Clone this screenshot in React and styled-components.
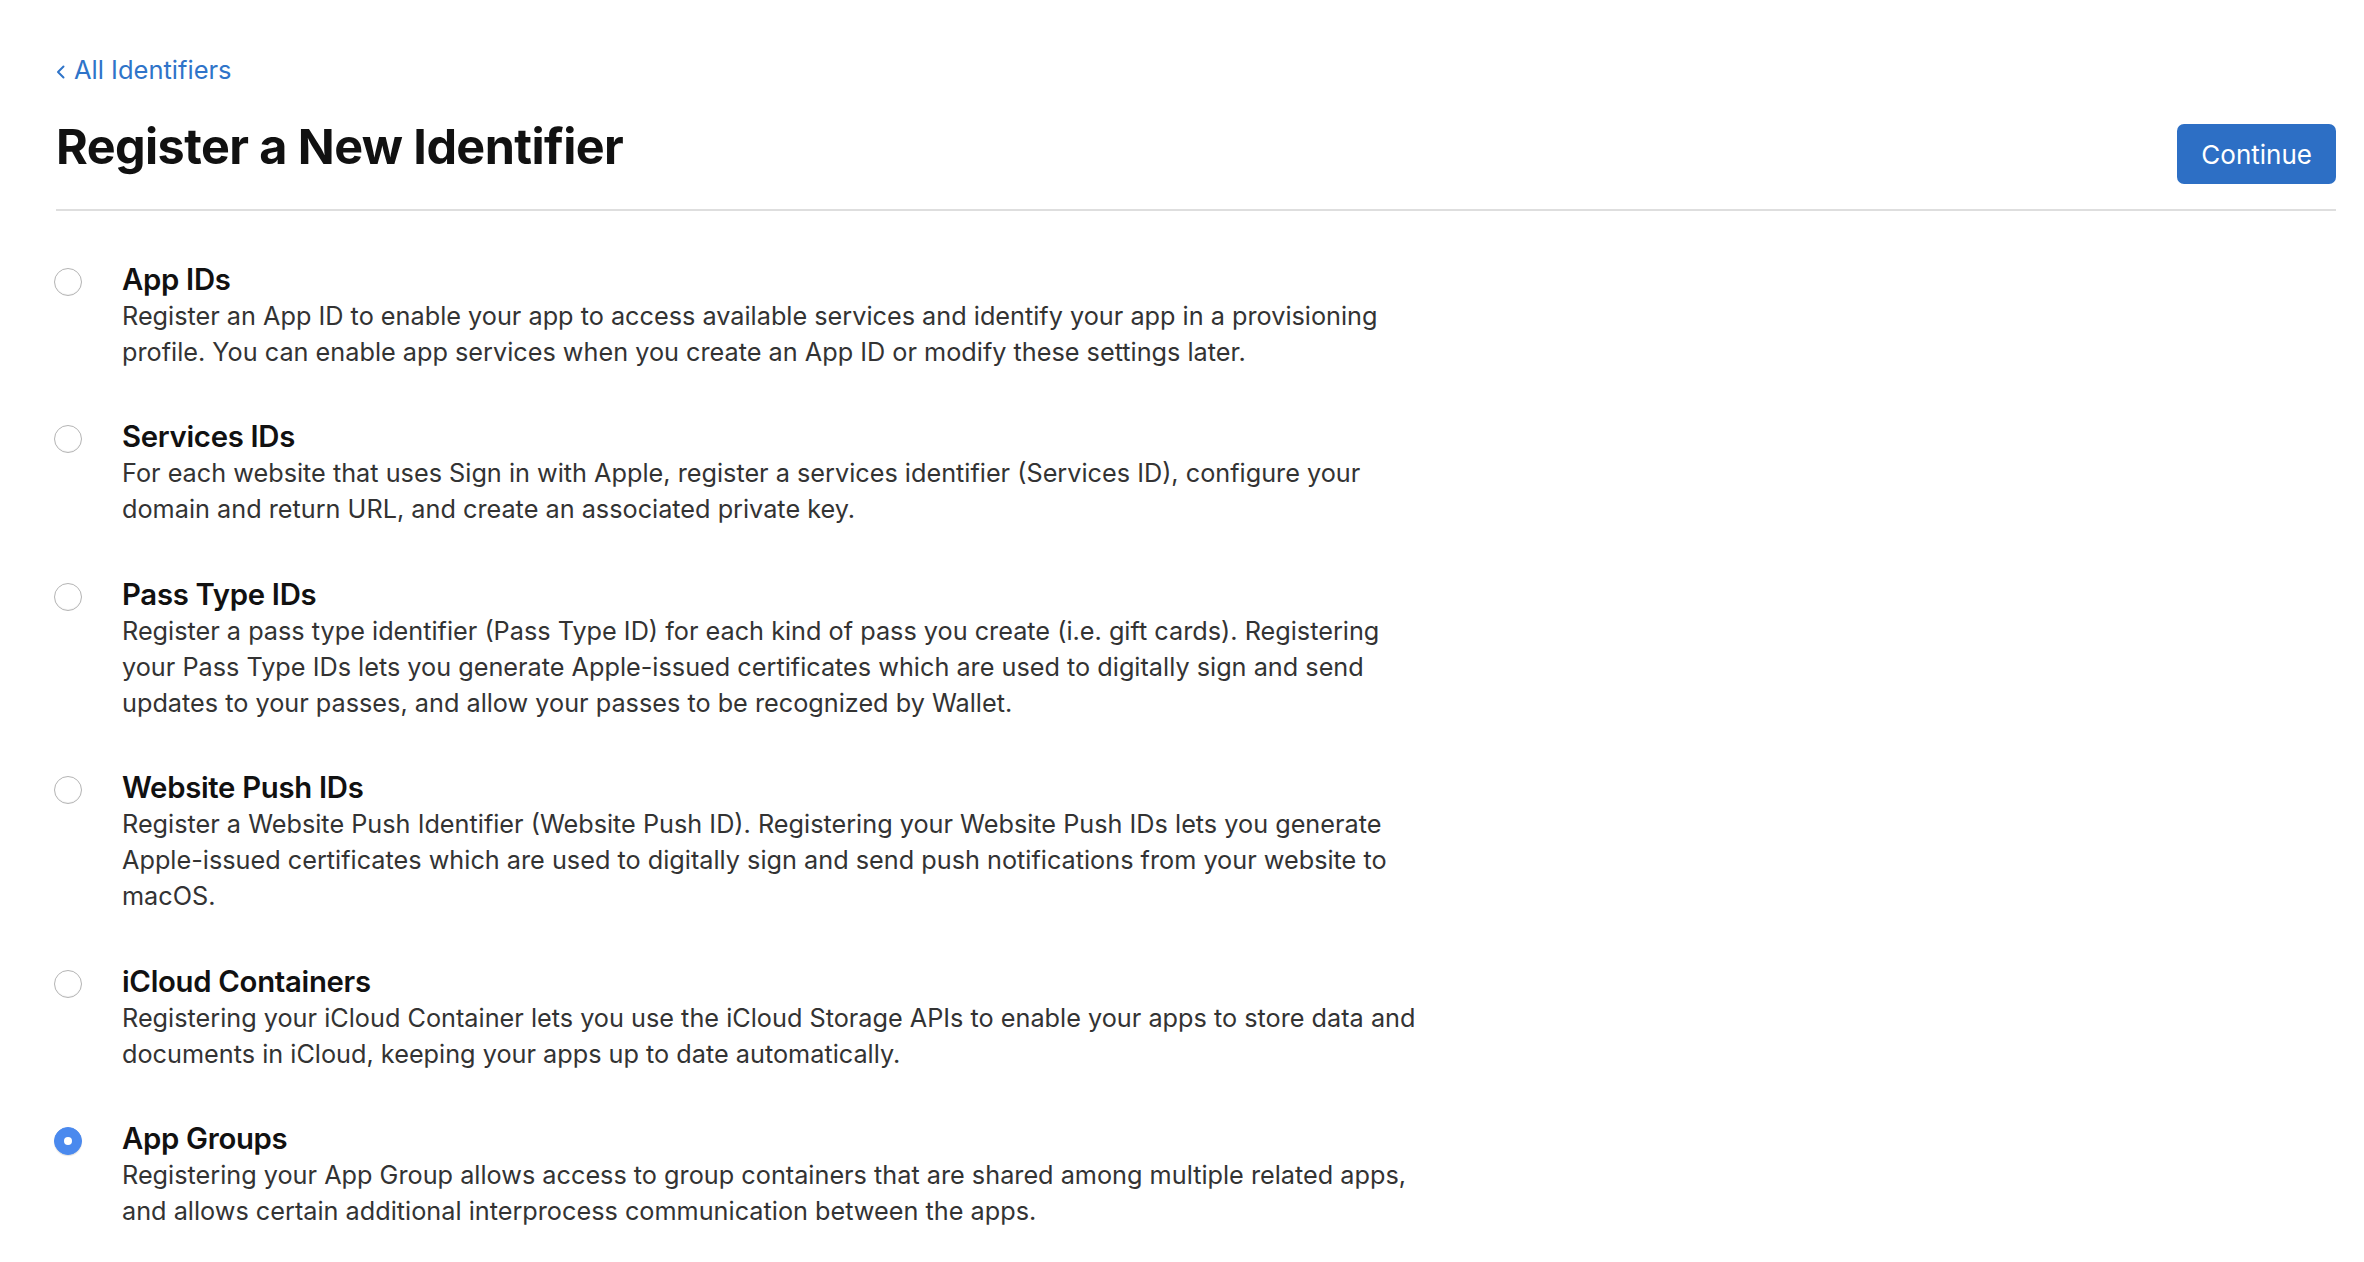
import React, { useState } from 'react';
import styled, { createGlobalStyle } from 'styled-components';

const GlobalStyle = createGlobalStyle`
  html, body {
    margin: 0;
    padding: 0;
    background: #fff;
  }
  body {
    font-family: Inter, "Noto Sans", "Liberation Sans", sans-serif;
    color: #333;
    -webkit-font-smoothing: antialiased;
  }
`;

const Page = styled.div`
  padding: 52px 28px 40px 56px;
`;

const BackLink = styled.a`
  display: inline-flex;
  align-items: center;
  gap: 9px;
  font-size: 25.5px;
  line-height: 36px;
  color: #2f74c9;
  text-decoration: none;
  cursor: pointer;
`;

const Chevron = styled.svg`
  width: 9px;
  height: 14px;
  margin-top: 3px;
`;

const Header = styled.header`
  display: flex;
  justify-content: space-between;
  align-items: flex-end;
  margin-top: 31px;
  padding-bottom: 25px;
  border-bottom: 2px solid #dedede;
`;

const Title = styled.h1`
  margin: 0 0 10px;
  font-size: 48.5px;
  line-height: 55px;
  font-weight: 700;
  color: #111;
  letter-spacing: -0.012em;
`;

const Button = styled.button`
  height: 60px;
  padding: 0 24px;
  border: none;
  border-radius: 7px;
  background: #2d6fc5;
  color: #fff;
  font: inherit;
  font-size: 26px;
  font-weight: 400;
  cursor: pointer;
`;

const List = styled.div`
  display: flex;
  flex-direction: column;
  gap: 49.6px;
  padding-top: 50.5px;
`;

const Item = styled.label`
  display: grid;
  grid-template-columns: 66px 1fr;
  cursor: pointer;
`;

const RadioCell = styled.div`
  height: 36px;
  display: flex;
  align-items: center;
  margin: 2px 0 0 -2px;
`;

const Radio = styled.span`
  box-sizing: border-box;
  width: 28px;
  height: 28px;
  border-radius: 50%;
  display: flex;
  align-items: center;
  justify-content: center;
  background: ${({ $checked }) => ($checked ? '#4a89ee' : '#fff')};
  border: 1.5px solid ${({ $checked }) => ($checked ? '#4a89ee' : '#b4b4b4')};
  box-shadow: ${({ $checked }) =>
    $checked ? '0 1px 1px rgba(0, 0, 0, 0.12)' : 'inset 0 -1px 1px rgba(0, 0, 0, 0.05)'};

  &::after {
    content: '';
    display: ${({ $checked }) => ($checked ? 'block' : 'none')};
    width: 8px;
    height: 8px;
    border-radius: 50%;
    background: #fff;
  }
`;

const Content = styled.div`
  display: flex;
  flex-direction: column;
`;

const ItemTitle = styled.div`
  font-size: 29.3px;
  line-height: 36px;
  font-weight: 600;
  color: #111;
  letter-spacing: -0.01em;
`;

const Line = styled.span`
  display: block;
  white-space: nowrap;
  font-size: 25.25px;
  line-height: 36px;
  color: #333;
`;

const identifiers = [
  {
    id: 'app-ids',
    title: 'App IDs',
    lines: [
      'Register an App ID to enable your app to access available services and identify your app in a provisioning',
      'profile. You can enable app services when you create an App ID or modify these settings later.',
    ],
  },
  {
    id: 'services-ids',
    title: 'Services IDs',
    lines: [
      'For each website that uses Sign in with Apple, register a services identifier (Services ID), configure your',
      'domain and return URL, and create an associated private key.',
    ],
  },
  {
    id: 'pass-type-ids',
    title: 'Pass Type IDs',
    lines: [
      'Register a pass type identifier (Pass Type ID) for each kind of pass you create (i.e. gift cards). Registering',
      'your Pass Type IDs lets you generate Apple-issued certificates which are used to digitally sign and send',
      'updates to your passes, and allow your passes to be recognized by Wallet.',
    ],
  },
  {
    id: 'website-push-ids',
    title: 'Website Push IDs',
    lines: [
      'Register a Website Push Identifier (Website Push ID). Registering your Website Push IDs lets you generate',
      'Apple-issued certificates which are used to digitally sign and send push notifications from your website to',
      'macOS.',
    ],
  },
  {
    id: 'icloud-containers',
    title: 'iCloud Containers',
    lines: [
      'Registering your iCloud Container lets you use the iCloud Storage APIs to enable your apps to store data and',
      'documents in iCloud, keeping your apps up to date automatically.',
    ],
  },
  {
    id: 'app-groups',
    title: 'App Groups',
    lines: [
      'Registering your App Group allows access to group containers that are shared among multiple related apps,',
      'and allows certain additional interprocess communication between the apps.',
    ],
  },
];

export default function App() {
  const [selected, setSelected] = useState('app-groups');

  return (
    <Page>
      <GlobalStyle />
      <BackLink>
        <Chevron viewBox="0 0 9 14" fill="none">
          <path d="M7.5 1.5L2 7l5.5 5.5" stroke="currentColor" strokeWidth="2" strokeLinecap="round" strokeLinejoin="round" />
        </Chevron>
        All Identifiers
      </BackLink>
      <Header>
        <Title>Register a New Identifier</Title>
        <Button>Continue</Button>
      </Header>
      <List>
        {identifiers.map((item) => (
          <Item key={item.id} onClick={() => setSelected(item.id)}>
            <RadioCell>
              <Radio $checked={selected === item.id} />
            </RadioCell>
            <Content>
              <ItemTitle>{item.title}</ItemTitle>
              {item.lines.map((line) => (
                <Line key={line}>{line}</Line>
              ))}
            </Content>
          </Item>
        ))}
      </List>
    </Page>
  );
}
